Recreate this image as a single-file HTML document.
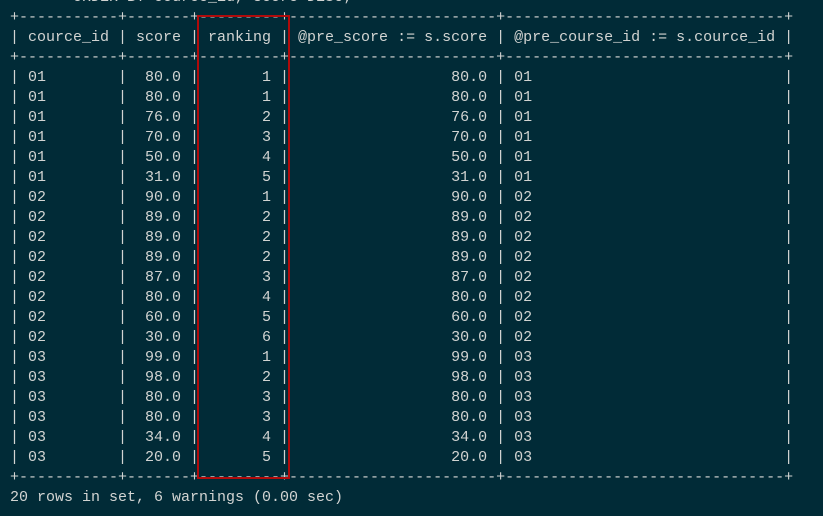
<!DOCTYPE html>
<html><head><style>
html,body{margin:0;padding:0;width:823px;height:516px;overflow:hidden;background:#012b37;}
pre{position:absolute;left:10px;top:-12px;margin:0;font-family:"Liberation Mono",monospace;font-size:15px;line-height:20px;color:#d2d4d2;}
.box{position:absolute;left:197px;top:15px;width:89px;height:460px;border:2px solid #b00b0b;}
</style></head><body>
<pre>    -&gt; ORDER BY cource_id, score DESC;
+-----------+-------+---------+-----------------------+-------------------------------+
| cource_id | score | ranking | @pre_score := s.score | @pre_course_id := s.cource_id |
+-----------+-------+---------+-----------------------+-------------------------------+
| 01        |  80.0 |       1 |                  80.0 | 01                            |
| 01        |  80.0 |       1 |                  80.0 | 01                            |
| 01        |  76.0 |       2 |                  76.0 | 01                            |
| 01        |  70.0 |       3 |                  70.0 | 01                            |
| 01        |  50.0 |       4 |                  50.0 | 01                            |
| 01        |  31.0 |       5 |                  31.0 | 01                            |
| 02        |  90.0 |       1 |                  90.0 | 02                            |
| 02        |  89.0 |       2 |                  89.0 | 02                            |
| 02        |  89.0 |       2 |                  89.0 | 02                            |
| 02        |  89.0 |       2 |                  89.0 | 02                            |
| 02        |  87.0 |       3 |                  87.0 | 02                            |
| 02        |  80.0 |       4 |                  80.0 | 02                            |
| 02        |  60.0 |       5 |                  60.0 | 02                            |
| 02        |  30.0 |       6 |                  30.0 | 02                            |
| 03        |  99.0 |       1 |                  99.0 | 03                            |
| 03        |  98.0 |       2 |                  98.0 | 03                            |
| 03        |  80.0 |       3 |                  80.0 | 03                            |
| 03        |  80.0 |       3 |                  80.0 | 03                            |
| 03        |  34.0 |       4 |                  34.0 | 03                            |
| 03        |  20.0 |       5 |                  20.0 | 03                            |
+-----------+-------+---------+-----------------------+-------------------------------+
20 rows in set, 6 warnings (0.00 sec)</pre>
<div class="box"></div>
</body></html>
